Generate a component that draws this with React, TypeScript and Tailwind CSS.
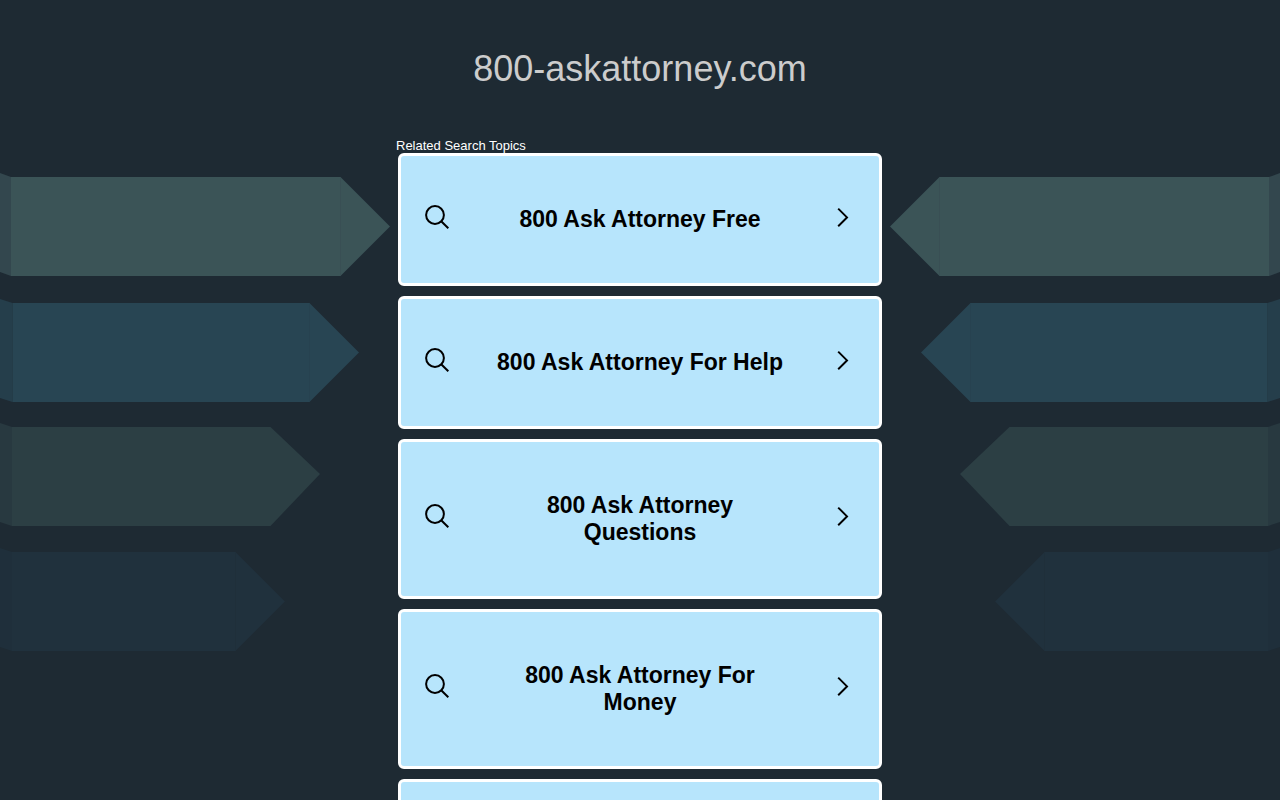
interface Topic {
    id: number;
    title: string;
}

interface TopicCardProps {
    title: string;
}

interface ArrowsProps {
    className: string;
}

const topics: Topic[] = [
    { id: 1, title: "800 Ask Attorney Free" },
    { id: 2, title: "800 Ask Attorney For Help" },
    { id: 3, title: "800 Ask Attorney Questions" },
    { id: 4, title: "800 Ask Attorney For Money" },
    { id: 5, title: "" },
];

const SearchIcon = () => (
    <svg
        viewBox="0 0 24 24"
        fill="none"
        stroke="currentColor"
        strokeWidth="2"
        className="-mt-1.5 h-6 w-6 shrink-0">
        <circle cx="10" cy="10" r="8.9" />
        <path d="M16.2 16.2 L23.3 23.3" />
    </svg>
);

const ChevronIcon = () => (
    <svg
        viewBox="0 0 24 24"
        fill="none"
        stroke="currentColor"
        strokeWidth="2"
        className="-mt-1.5 h-6 w-6 shrink-0">
        <path d="M7.2 3.6 L16 12.4 L7.2 21.2" />
    </svg>
);

const TopicCard = ({ title }: TopicCardProps) => (
    <a
        href="#"
        className="flex items-center rounded-md border-3 border-white bg-[#b7e5fc] px-6 py-[50px] text-black">
        <SearchIcon />
        <span className="mx-10 min-h-[27px] flex-1 text-center text-[23px] leading-[27px] font-bold">
            {title}
        </span>
        <ChevronIcon />
    </a>
);

// stack of four ribbons pointing to the right, each with a folded edge
const Arrows = ({ className }: ArrowsProps) => (
    <svg viewBox="0 0 390 800" className={className} aria-hidden="true">
        <path d="M0 173 L11 177 V276 L0 272 Z" fill="#33474e" />
        <path d="M11 177 H340.5 L390 226.5 L340.5 276 H11 Z" fill="#3b5457" />
        <path d="M340.5 178 V275" stroke="#394f54" />
        <path d="M0 299 L12.5 303 V402 L0 398 Z" fill="#253e4b" />
        <path d="M12.5 303 H309.5 L359 352.5 L309.5 402 H12.5 Z" fill="#284553" />
        <path d="M309.5 304 V401" stroke="#274250" />
        <path d="M0 423 L12 427 V526 L0 522 Z" fill="#283940" />
        <path d="M12 427 H270.5 L320 474 L270.5 526 H12 Z" fill="#2c3f44" />
        <path d="M0 548 L12 552 V651 L0 647 Z" fill="#1f2f3b" />
        <path d="M12 552 H235.5 L285 601.5 L235.5 651 H12 Z" fill="#20313d" />
        <path d="M235.5 553 V650" stroke="#1f2f3a" />
    </svg>
);

const App = () => {
    return (
        <div className="relative h-screen overflow-hidden bg-[#1e2a33] font-['Liberation_Sans',Arial,sans-serif]">
            <Arrows className="absolute top-0 left-0 h-[800px] w-[390px]" />
            <Arrows className="absolute top-0 right-0 h-[800px] w-[390px] -scale-x-100" />
            <main className="relative mx-auto max-w-[488px] px-0.5">
                <h1 className="pt-[49px] text-center text-[36px] leading-10 text-[#cccccc]">
                    800-askattorney.com
                </h1>
                <h2 className="-ml-0.5 pt-[49px] text-[13px] leading-[15px] text-white">
                    Related Search Topics
                </h2>
                <div className="flex flex-col gap-2.5">
                    {topics.map((topic) => (
                        <TopicCard key={topic.id} title={topic.title} />
                    ))}
                </div>
            </main>
        </div>
    );
};

export default App;
